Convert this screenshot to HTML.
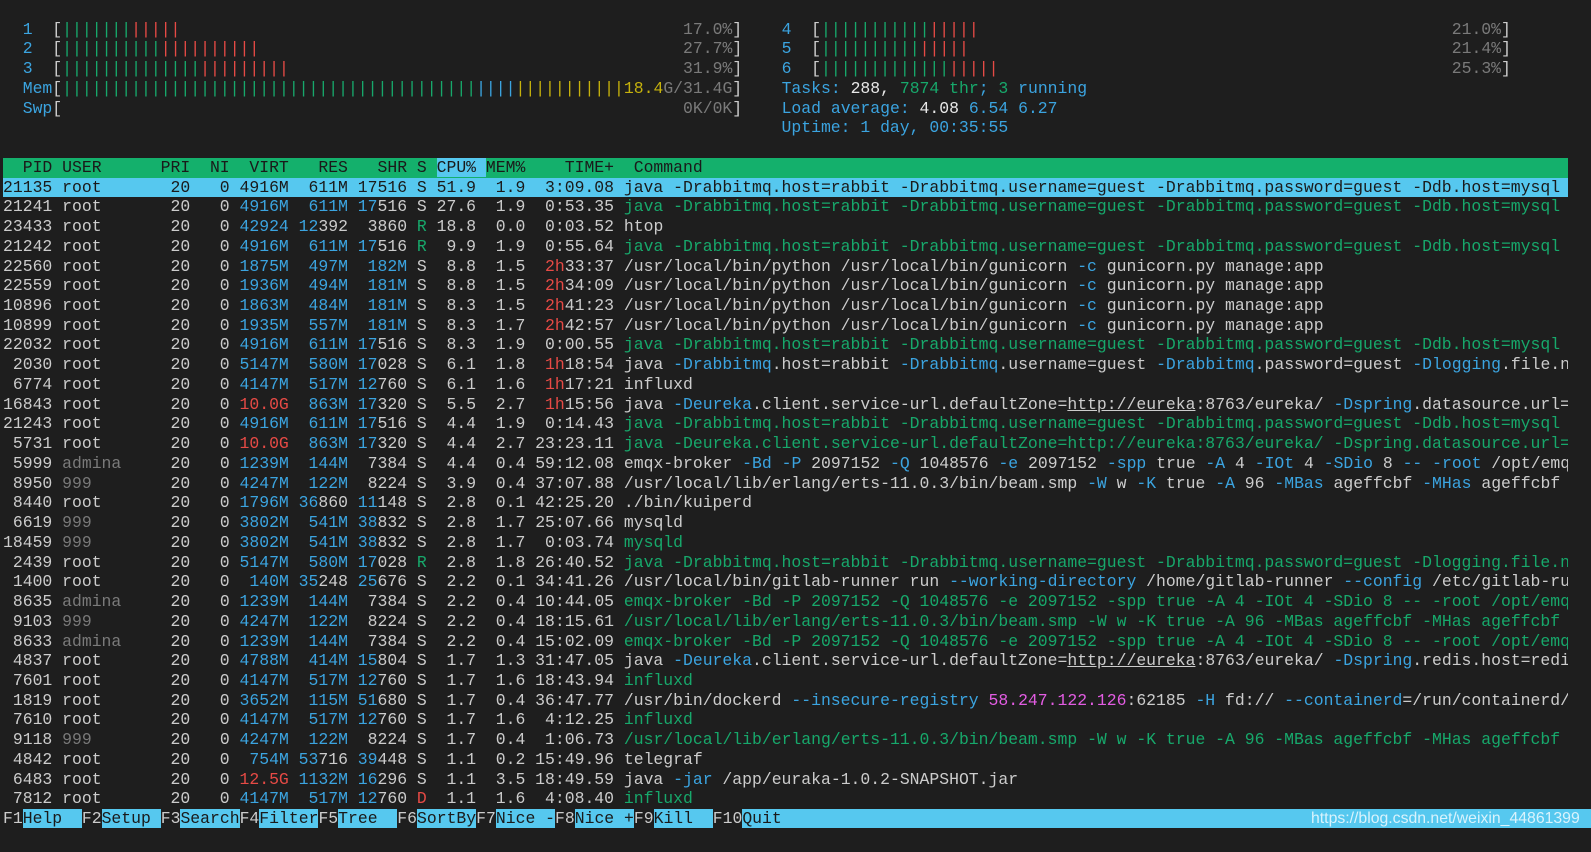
<!DOCTYPE html>
<html><head><meta charset="utf-8"><style>
html,body{margin:0;padding:0;background:#1e1e1e;width:1591px;height:852px;overflow:hidden}
#t{position:absolute;left:3px;top:0;width:1565px;overflow:hidden;font-family:"Liberation Mono",monospace;font-size:16.43px;color:#cccccc}
.l{height:19.74px;line-height:19.74px;white-space:pre;overflow:hidden}
.c{color:#3ba4e0}.g{color:#17a86b}.r{color:#e64a45}.k{color:#7a7a7a}.y{color:#c6b20c}.m{color:#e35ce3}.w{color:#e8e8e8}
.u{text-decoration:underline}
.hd{background:#14b06c;color:#1a1a1a}
.hc{background:#56c8ef}
.sel{background:#56c8ef;color:#1a1a1a}
.sel span{color:#1a1a1a}
#f{position:absolute;left:3px;top:809px;width:1588px;height:19.74px;line-height:19.74px;font-family:"Liberation Mono",monospace;font-size:16.43px;color:#cccccc;white-space:pre;overflow:hidden}
#f .b{background:#56c8ef;color:#1a1a1a}
#wm{position:absolute;left:1311px;top:809px;height:20px;line-height:20px;font-family:"Liberation Sans",sans-serif;font-size:15.8px;color:rgba(240,250,255,0.85)}
</style></head><body>
<div id="t">
<div class="l"> </div>
<div class="l">  <span class="c">1</span>  [<span class="g">|||||||</span><span class="r">|||||</span>                                                   <span class="k">17.0%</span>]    <span class="c">4</span>  [<span class="g">|||||||||||</span><span class="r">|||||</span>                                                <span class="k">21.0%</span>]</div>
<div class="l">  <span class="c">2</span>  [<span class="g">||||||||||</span><span class="r">||||||||||</span>                                           <span class="k">27.7%</span>]    <span class="c">5</span>  [<span class="g">||||||||||</span><span class="r">|||||</span>                                                 <span class="k">21.4%</span>]</div>
<div class="l">  <span class="c">3</span>  [<span class="g">||||||||||||||</span><span class="r">|||||||||</span>                                        <span class="k">31.9%</span>]    <span class="c">6</span>  [<span class="g">|||||||||||||</span><span class="r">|||||</span>                                              <span class="k">25.3%</span>]</div>
<div class="l">  <span class="c">Mem</span>[<span class="g">||||||||||||||||||||||||||||||||||||||||||</span><span class="c">||||</span><span class="y">|||||||||||18.4</span><span class="k">G/31.4G</span>]    <span class="c">Tasks: </span><span class="w">288, </span><span class="g">7874 thr</span><span class="c">; </span><span class="g">3</span><span class="c"> running</span></div>
<div class="l">  <span class="c">Swp</span>[                                                               <span class="k">0K/0K</span>]    <span class="c">Load average: </span><span class="w">4.08 </span><span class="c">6.54 6.27</span></div>
<div class="l">                                                                               <span class="c">Uptime: 1 day, 00:35:55</span></div>
<div class="l"> </div>
<div class="l hd">  PID USER      PRI  NI  VIRT   RES   SHR S <span class="hc">CPU% </span>MEM%    TIME+  Command                                                                                              </div>
<div class="l sel">21135 root       20   0 4916M  611M 17516 S 51.9  1.9  3:09.08 java -Drabbitmq.host=rabbit -Drabbitmq.username=guest -Drabbitmq.password=guest -Ddb.host=mysql -Ddb.port=3306            </div>
<div class="l">21241 root       20   0 <span class="c">4916M  611M 17</span>516 S 27.6  1.9  0:53.35 <span class="g">java -Drabbitmq.host=rabbit -Drabbitmq.username=guest -Drabbitmq.password=guest -Ddb.host=mysql -Ddb.port=3306</span></div>
<div class="l">23433 root       20   0 <span class="c">42924 12</span>392  3860 <span class="g">R</span> 18.8  0.0  0:03.52 htop</div>
<div class="l">21242 root       20   0 <span class="c">4916M  611M 17</span>516 <span class="g">R</span>  9.9  1.9  0:55.64 <span class="g">java -Drabbitmq.host=rabbit -Drabbitmq.username=guest -Drabbitmq.password=guest -Ddb.host=mysql -Ddb.port=3306</span></div>
<div class="l">22560 root       20   0 <span class="c">1875M  497M  182M</span> S  8.8  1.5  <span class="r">2h</span>33:37 /usr/local/bin/python /usr/local/bin/gunicorn <span class="c">-c</span> gunicorn.py manage:app</div>
<div class="l">22559 root       20   0 <span class="c">1936M  494M  181M</span> S  8.8  1.5  <span class="r">2h</span>34:09 /usr/local/bin/python /usr/local/bin/gunicorn <span class="c">-c</span> gunicorn.py manage:app</div>
<div class="l">10896 root       20   0 <span class="c">1863M  484M  181M</span> S  8.3  1.5  <span class="r">2h</span>41:23 /usr/local/bin/python /usr/local/bin/gunicorn <span class="c">-c</span> gunicorn.py manage:app</div>
<div class="l">10899 root       20   0 <span class="c">1935M  557M  181M</span> S  8.3  1.7  <span class="r">2h</span>42:57 /usr/local/bin/python /usr/local/bin/gunicorn <span class="c">-c</span> gunicorn.py manage:app</div>
<div class="l">22032 root       20   0 <span class="c">4916M  611M 17</span>516 S  8.3  1.9  0:00.55 <span class="g">java -Drabbitmq.host=rabbit -Drabbitmq.username=guest -Drabbitmq.password=guest -Ddb.host=mysql -Ddb.port=3306</span></div>
<div class="l"> 2030 root       20   0 <span class="c">5147M  580M 17</span>028 S  6.1  1.8  <span class="r">1h</span>18:54 java <span class="c">-Drabbitmq</span>.host=rabbit <span class="c">-Drabbitmq</span>.username=guest <span class="c">-Drabbitmq</span>.password=guest <span class="c">-Dlogging</span>.file.name=/app/log</div>
<div class="l"> 6774 root       20   0 <span class="c">4147M  517M 12</span>760 S  6.1  1.6  <span class="r">1h</span>17:21 influxd</div>
<div class="l">16843 root       20   0 <span class="r">10.0G</span>  <span class="c">863M 17</span>320 S  5.5  2.7  <span class="r">1h</span>15:56 java <span class="c">-Deureka</span>.client.service-url.defaultZone=<span class="u">http://eureka</span>:8763/eureka/ <span class="c">-Dspring</span>.datasource.url=jdbc</div>
<div class="l">21243 root       20   0 <span class="c">4916M  611M 17</span>516 S  4.4  1.9  0:14.43 <span class="g">java -Drabbitmq.host=rabbit -Drabbitmq.username=guest -Drabbitmq.password=guest -Ddb.host=mysql -Ddb.port=3306</span></div>
<div class="l"> 5731 root       20   0 <span class="r">10.0G</span>  <span class="c">863M 17</span>320 S  4.4  2.7 23:23.11 <span class="g">java -Deureka.client.service-url.defaultZone=http://eureka:8763/eureka/ -Dspring.datasource.url=jdbc</span></div>
<div class="l"> 5999 <span class="k">admina</span>     20   0 <span class="c">1239M  144M</span>  7384 S  4.4  0.4 59:12.08 emqx-broker <span class="c">-Bd</span> <span class="c">-P</span> 2097152 <span class="c">-Q</span> 1048576 <span class="c">-e</span> 2097152 <span class="c">-spp</span> true <span class="c">-A</span> 4 <span class="c">-IOt</span> 4 <span class="c">-SDio</span> 8 <span class="c">--</span> <span class="c">-root</span> /opt/emqx</div>
<div class="l"> 8950 <span class="k">999</span>        20   0 <span class="c">4247M  122M</span>  8224 S  3.9  0.4 37:07.88 /usr/local/lib/erlang/erts-11.0.3/bin/beam.smp <span class="c">-W</span> w <span class="c">-K</span> true <span class="c">-A</span> 96 <span class="c">-MBas</span> ageffcbf <span class="c">-MHas</span> ageffcbf <span class="c">-MBlmbcs</span></div>
<div class="l"> 8440 root       20   0 <span class="c">1796M 36</span>860 <span class="c">11</span>148 S  2.8  0.1 42:25.20 ./bin/kuiperd</div>
<div class="l"> 6619 <span class="k">999</span>        20   0 <span class="c">3802M  541M 38</span>832 S  2.8  1.7 25:07.66 mysqld</div>
<div class="l">18459 <span class="k">999</span>        20   0 <span class="c">3802M  541M 38</span>832 S  2.8  1.7  0:03.74 <span class="g">mysqld</span></div>
<div class="l"> 2439 root       20   0 <span class="c">5147M  580M 17</span>028 <span class="g">R</span>  2.8  1.8 26:40.52 <span class="g">java -Drabbitmq.host=rabbit -Drabbitmq.username=guest -Drabbitmq.password=guest -Dlogging.file.name=/app/log</span></div>
<div class="l"> 1400 root       20   0  <span class="c">140M 35</span>248 <span class="c">25</span>676 S  2.2  0.1 34:41.26 /usr/local/bin/gitlab-runner run <span class="c">--working-directory</span> /home/gitlab-runner <span class="c">--config</span> /etc/gitlab-runner/config.toml</div>
<div class="l"> 8635 <span class="k">admina</span>     20   0 <span class="c">1239M  144M</span>  7384 S  2.2  0.4 10:44.05 <span class="g">emqx-broker -Bd -P 2097152 -Q 1048576 -e 2097152 -spp true -A 4 -IOt 4 -SDio 8 -- -root /opt/emqx</span></div>
<div class="l"> 9103 <span class="k">999</span>        20   0 <span class="c">4247M  122M</span>  8224 S  2.2  0.4 18:15.61 <span class="g">/usr/local/lib/erlang/erts-11.0.3/bin/beam.smp -W w -K true -A 96 -MBas ageffcbf -MHas ageffcbf -MBlmbcs</span></div>
<div class="l"> 8633 <span class="k">admina</span>     20   0 <span class="c">1239M  144M</span>  7384 S  2.2  0.4 15:02.09 <span class="g">emqx-broker -Bd -P 2097152 -Q 1048576 -e 2097152 -spp true -A 4 -IOt 4 -SDio 8 -- -root /opt/emqx</span></div>
<div class="l"> 4837 root       20   0 <span class="c">4788M  414M 15</span>804 S  1.7  1.3 31:47.05 java <span class="c">-Deureka</span>.client.service-url.defaultZone=<span class="u">http://eureka</span>:8763/eureka/ <span class="c">-Dspring</span>.redis.host=redis</div>
<div class="l"> 7601 root       20   0 <span class="c">4147M  517M 12</span>760 S  1.7  1.6 18:43.94 <span class="g">influxd</span></div>
<div class="l"> 1819 root       20   0 <span class="c">3652M  115M 51</span>680 S  1.7  0.4 36:47.77 /usr/bin/dockerd <span class="c">--insecure-registry</span> <span class="m">58.247.122.126</span>:62185 <span class="c">-H</span> fd:// <span class="c">--containerd</span>=/run/containerd/containerd.sock</div>
<div class="l"> 7610 root       20   0 <span class="c">4147M  517M 12</span>760 S  1.7  1.6  4:12.25 <span class="g">influxd</span></div>
<div class="l"> 9118 <span class="k">999</span>        20   0 <span class="c">4247M  122M</span>  8224 S  1.7  0.4  1:06.73 <span class="g">/usr/local/lib/erlang/erts-11.0.3/bin/beam.smp -W w -K true -A 96 -MBas ageffcbf -MHas ageffcbf -MBlmbcs</span></div>
<div class="l"> 4842 root       20   0  <span class="c">754M 53</span>716 <span class="c">39</span>448 S  1.1  0.2 15:49.96 telegraf</div>
<div class="l"> 6483 root       20   0 <span class="r">12.5G</span> <span class="c">1132M 16</span>296 S  1.1  3.5 18:49.59 java <span class="c">-jar</span> /app/euraka-1.0.2-SNAPSHOT.jar</div>
<div class="l"> 7812 root       20   0 <span class="c">4147M  517M 12</span>760 <span class="r">D</span>  1.1  1.6  4:08.40 <span class="g">influxd</span></div>
</div>
<div id="f">F1<span class="b">Help  </span>F2<span class="b">Setup </span>F3<span class="b">Search</span>F4<span class="b">Filter</span>F5<span class="b">Tree  </span>F6<span class="b">SortBy</span>F7<span class="b">Nice -</span>F8<span class="b">Nice +</span>F9<span class="b">Kill  </span>F10<span class="b">Quit                                                                                    </span></div>
<div id="wm">https://blog.csdn.net/weixin_44861399</div>
</body></html>
